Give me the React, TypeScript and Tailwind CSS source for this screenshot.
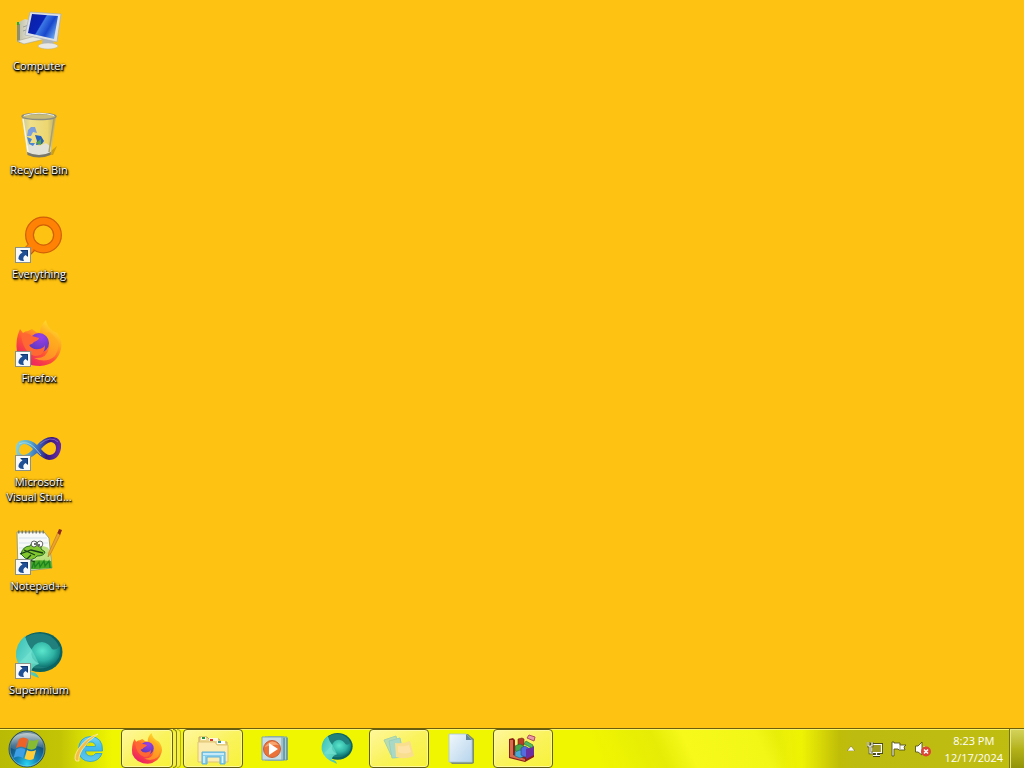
import type { ReactNode } from "react";

type IconProps = { className?: string };

function ComputerIcon({ className }: IconProps) {
  return (
    <svg viewBox="0 0 48 48" className={className} aria-hidden="true">
      <defs>
        <linearGradient id="pc-screen" x1="0" y1="0.2" x2="1" y2="0.7">
          <stop offset="0" stopColor="#0a1fa4" />
          <stop offset="0.42" stopColor="#0a24b8" />
          <stop offset="0.46" stopColor="#3c78e4" />
          <stop offset="0.7" stopColor="#1746cc" />
          <stop offset="1" stopColor="#6da8ee" />
        </linearGradient>
        <linearGradient id="pc-case" x1="0" y1="0" x2="1" y2="0">
          <stop offset="0" stopColor="#b9b9a0" />
          <stop offset="1" stopColor="#eceadc" />
        </linearGradient>
      </defs>
      <path d="M2 15 L10 11 L17 13 V33 L8 36 L2 33 Z" fill="url(#pc-case)" />
      <path d="M2 15 L5 16 V35 L2 33 Z" fill="#8d8f70" />
      <rect x="2" y="14" width="2" height="3" fill="#23b029" />
      <path d="M8 19 L14 17 M8 23 L14 21" stroke="#9aa09a" />
      <path d="M2 33 L20 28 L30 31 L9 36 Z" fill="#e9e8df" stroke="#a7a28c" strokeWidth="0.6" />
      <path d="M28 30 L38 32 L39 37 L27 36 Z" fill="#aeb6be" />
      <ellipse cx="33" cy="38" rx="10" ry="3" fill="#e8e9e6" stroke="#b4b09c" strokeWidth="0.5" />
      <path d="M15 4 L46 6 L42 34 L10 27 Z" fill="#dde1e6" stroke="#a7adb5" strokeWidth="0.7" />
      <path d="M17 6 L43 8 L39 31 L13 25 Z" fill="url(#pc-screen)" />
    </svg>
  );
}

function RecycleIcon({ className }: IconProps) {
  return (
    <svg viewBox="0 0 48 48" className={className} aria-hidden="true">
      <defs>
        <linearGradient id="bin-glass" x1="0" y1="0" x2="1" y2="0">
          <stop offset="0" stopColor="#c9c99c" />
          <stop offset="0.25" stopColor="#f0e08a" />
          <stop offset="0.75" stopColor="#ecd670" />
          <stop offset="1" stopColor="#b9ac68" />
        </linearGradient>
      </defs>
      <path d="M31 43 L42 34 L38 43 Z" fill="#a07b12" opacity="0.5" />
      <path d="M7 4 H41 L36 42 Q24 48 12 42 Z" fill="url(#bin-glass)" />
      <path d="M12 34 L19 31 L24 34 L31 31 L36 35 L35 42 Q24 47 13 42 Z" fill="#e2e2d9" />
      <path d="M12 40 Q24 46 36 40 L35.500 43 Q24 48 12.500 43 Z" fill="#77776c" />
      <path d="M8 7 L13 40" stroke="#fff" strokeWidth="1.500" opacity="0.8" />
      <path d="M39 7 L34 40" stroke="#a99f70" strokeWidth="1.500" />
      <ellipse cx="24" cy="4.500" rx="17" ry="3" fill="#c8bc78" stroke="#8b8c80" strokeWidth="1.400" />
      <path d="M9 3.500 Q24 -1 39 3.500" fill="none" stroke="#f0f0e4" strokeWidth="1" />
      <path d="M13 18 L16 15 H20 L22 21 L18 20 L16 24 H12 Z" fill="#7d9fdc" />
      <path d="M12 25 L17 27 L15 31 L20 31 L18 34 L14 32 Z" fill="#4a86d4" />
      <path d="M20 23 L26 24 L29 29 L27 32 L21 33 L22 29 Z" fill="#2862ba" />
      <path d="M21 31 L26 27 L26 33 Z" fill="#50a44b" />
    </svg>
  );
}

function EverythingIcon({ className }: IconProps) {
  return (
    <svg viewBox="0 0 48 48" className={className} aria-hidden="true">
      <path d="M16 26 L3 39 L10 44 L22 32 Z" fill="#ff8000" stroke="#c85a08" strokeWidth="1.200" />
      <circle cx="28.500" cy="19" r="14" fill="none" stroke="#d06008" strokeWidth="9" />
      <circle cx="28.500" cy="19" r="14" fill="none" stroke="#ff8205" strokeWidth="6.500" />
      <path d="M17 25 L11 31 L16 36 L22 30 Z" fill="#ff8205" />
    </svg>
  );
}

function FirefoxIcon({ className }: IconProps) {
  return (
    <svg viewBox="0 0 48 48" className={className} aria-hidden="true">
      <defs>
        <linearGradient id="fox-body" x1="0.85" y1="0.05" x2="0.25" y2="0.95">
          <stop offset="0" stopColor="#ffe52e" />
          <stop offset="0.35" stopColor="#ffa320" />
          <stop offset="0.65" stopColor="#ff5434" />
          <stop offset="1" stopColor="#ec1f65" />
        </linearGradient>
        <radialGradient id="fox-globe" cx="0.6" cy="0.2" r="0.9">
          <stop offset="0" stopColor="#9a3fe8" />
          <stop offset="1" stopColor="#5037b4" />
        </radialGradient>
      </defs>
      <path d="M5 9 L8 13 Q10 11 13 11 L17 9 L21 12 L25 13 Q25 5 31 0 Q32 7 38 11 L42 13 Q48 21 46 29 Q42 45 25 46 Q8 46 2 32 Q0 20 5 9 Z" fill="url(#fox-body)" />
      <path d="M34 12 Q49 22 40 36 Q31 44 19 38 Q32 39 34 28 Q36 20 28 15 Z" fill="#ffad20" opacity="0.7" />
      <circle cx="24" cy="23" r="10" fill="url(#fox-globe)" />
      <path d="M6 14 Q13 12 17 16 L24 18 Q24 20 19 22 Q18 24 14 25 Q17 30 24 29 Q29 28 30 25 Q30 36 20 36 Q8 33 6 14 Z" fill="#ff6733" />
    </svg>
  );
}

function VisualStudioIcon({ className }: IconProps) {
  return (
    <svg viewBox="0 0 48 48" className={className} aria-hidden="true">
      <defs>
        <linearGradient id="vs-loop" gradientUnits="userSpaceOnUse" x1="2" y1="20" x2="46" y2="28">
          <stop offset="0" stopColor="#88d0d8" />
          <stop offset="0.3" stopColor="#55a8cc" />
          <stop offset="0.5" stopColor="#3a62b4" />
          <stop offset="0.7" stopColor="#35187c" />
          <stop offset="1" stopColor="#6c2ca8" />
        </linearGradient>
      </defs>
      <path
        fillRule="evenodd"
        d="M1 27 Q0 16 10 16 Q17 16 22 21 Q30 12 38 13 Q47 14 46 24 Q44 36 34 36 Q28 35 22 29 Q15 35 9 36 Q2 35 1 27 Z M4 27 Q5 31 9 31 Q14 30 18 25 Q13 20 9 20 Q4 21 4 27 Z M26 25 Q31 31 35 31 Q41 30 41 24 Q41 19 36 18 Q31 19 26 25 Z"
        fill="url(#vs-loop)"
      />
      <path d="M25 20 Q36 11 43 18" fill="none" stroke="#9a78cc" strokeWidth="1" opacity="0.7" />
      <path d="M4 20 Q12 16 20 24 L26 31" fill="none" stroke="#b4e3e4" strokeWidth="1" opacity="0.7" />
    </svg>
  );
}

function NotepadIcon({ className }: IconProps) {
  return (
    <svg viewBox="0 0 48 48" className={className} aria-hidden="true">
      <path d="M2 4 H29 L34 10 L37 40 L3 44 Z" fill="#f8faf7" stroke="#8a916d" strokeWidth="0.8" />
      <path d="M4 10 H32 M4 15 H33 M4 20 H33 M5 25 H34 M5 31 H35" stroke="#ccd8e1" strokeWidth="0.7" />
      <path d="M3 4 H30" stroke="#777c70" strokeWidth="3" strokeDasharray="1.5 2" />
      <path d="M20 18 Q30 17 34 21 L37 40 L20 41 Z" fill="#a7d84c" opacity="0.7" />
      <path d="M7 34 Q20 31 36 33 L37 40 L7 42 Z" fill="#48a824" />
      <path d="M17 40 L19 34 L20 39 L24 34 L25 39 L29 33 L30 38 L34 33 L35 40" fill="none" stroke="#1d8422" strokeWidth="1.300" />
      <path d="M6 26 Q8 18 15 18 Q16 14 21 14 Q27 15 26 21 L30 24 Q29 28 22 28 Q17 34 10 30 Z" fill="#82c72d" stroke="#286c1d" strokeWidth="1" />
      <path d="M5 26 L16 22 L28 25 M9 22 L20 27 M16 27 L12 31 L20 34" fill="none" stroke="#183f19" strokeWidth="1.300" />
      <ellipse cx="19" cy="16" rx="2.800" ry="3" fill="#fff" stroke="#404040" strokeWidth="0.8" />
      <ellipse cx="25" cy="16" rx="2.800" ry="3" fill="#fff" stroke="#404040" strokeWidth="0.8" />
      <path d="M20 15 V17 M24 16 V18" stroke="#111" strokeWidth="1.200" />
      <path d="M33 29 L34 24 L43 4 L46 2 L45 7 L36 25 Z" fill="#eca32e" stroke="#b87222" strokeWidth="0.6" />
      <path d="M42.500 5 L44 1 L47 2 L45 7 Z" fill="#8c2920" />
    </svg>
  );
}

function SupermiumIcon({ className }: IconProps) {
  return (
    <svg viewBox="0 0 48 48" className={className} aria-hidden="true">
      <defs>
        <radialGradient id="sm-ball" cx="0.4" cy="0.35" r="0.65">
          <stop offset="0" stopColor="#5ce6cd" />
          <stop offset="0.6" stopColor="#2fb3a4" />
          <stop offset="1" stopColor="#0d7370" />
        </radialGradient>
        <linearGradient id="sm-tail" x1="0" y1="0" x2="1" y2="1">
          <stop offset="0" stopColor="#35bdb4" />
          <stop offset="0.5" stopColor="#65d9ca" />
          <stop offset="1" stopColor="#48c3aa" />
        </linearGradient>
      </defs>
      <ellipse cx="25" cy="20" rx="22.500" ry="20" fill="#0b6462" />
      <ellipse cx="24" cy="19" rx="20.500" ry="17.500" fill="#217f7c" />
      <path d="M15 22 Q18 10 27 10 Q34 11 37 17 Q41 19 45 14 Q47 27 37 33 Q27 38 20 32 Z" fill="url(#sm-ball)" />
      <path d="M10 4 Q12 12 17 18 Q14 26 24 32 Q17 34 16 40 Q22 40 24 46 Q4 40 1 25 Q0 12 10 4 Z" fill="url(#sm-tail)" />
      <path d="M17 18 L24 32 L4 31 Q10 25 17 18 Z" fill="#7be8d6" opacity="0.5" />
    </svg>
  );
}

function ShortcutArrow() {
  return (
    <svg viewBox="0 0 16 16" className="absolute bottom-px left-0 size-4" aria-hidden="true">
      <rect x="0.500" y="0.500" width="15" height="15" fill="#f7f9fb" stroke="#8c9187" />
      <path d="M5 3 H13 V10 L10.500 8 Q7 10 9 14 Q5 14.500 3.500 12 Q3 8 7.500 5.500 Z" fill="#1f4f94" />
      <path d="M6 3.500 H12.500 V9" fill="none" stroke="#12386f" />
    </svg>
  );
}

function StartOrb({ className }: IconProps) {
  return (
    <svg viewBox="0 0 38 38" className={className} aria-hidden="true">
      <defs>
        <radialGradient id="orb-blue" cx="0.5" cy="0.92" r="0.85">
          <stop offset="0" stopColor="#29d5f2" />
          <stop offset="0.35" stopColor="#1482b5" />
          <stop offset="0.75" stopColor="#164f77" />
          <stop offset="1" stopColor="#536e78" />
        </radialGradient>
        <linearGradient id="orb-shine" x1="0" y1="0" x2="0" y2="1">
          <stop offset="0" stopColor="#e5edef" stopOpacity="0.75" />
          <stop offset="1" stopColor="#b4c7d0" stopOpacity="0.15" />
        </linearGradient>
      </defs>
      <circle cx="19" cy="19" r="18" fill="url(#orb-blue)" stroke="#344e55" />
      <path d="M3 18 Q3 3 19 3 Q35 3 35 18 Q27 14 19 18 Q10 22 3 18 Z" fill="url(#orb-shine)" />
      <path d="M11 9 Q15 6 20 9 L18 18 Q13 15 8 18 Z" fill="#ed6226" />
      <path d="M21 10 Q26 12 31 9 L28 18 Q24 21 19 18.500 Z" fill="#87bb32" />
      <path d="M8 19.500 Q13 16.500 17.500 19.500 L15 28 Q10 25 5.500 28 Z" fill="#3d9fe5" />
      <path d="M19 20 Q23 22.500 28 20 L25.500 29 Q21 31 16.500 28.500 Z" fill="#ffcd37" />
      <circle cx="19" cy="19" r="17" fill="none" stroke="#a9dce5" opacity="0.45" />
    </svg>
  );
}

function ExplorerEIcon({ className }: IconProps) {
  return (
    <svg viewBox="0 0 32 32" className={className} aria-hidden="true">
      <defs>
        <linearGradient id="ie-e" x1="0" y1="0" x2="0" y2="1">
          <stop offset="0" stopColor="#70d3f3" />
          <stop offset="0.5" stopColor="#42baea" />
          <stop offset="1" stopColor="#62c9ed" />
        </linearGradient>
      </defs>
      <path fillRule="evenodd" d="M29.500 18 H12.500 Q13 23 18 23 Q21 23 22.500 20.500 H29 Q26 28.500 17 28.500 Q6 28 5.500 16.500 Q6 4 17.500 3.500 Q30 4 29.500 18 Z M12.700 13.500 H22.500 Q22 9 17.500 9 Q13.500 9 12.700 13.500 Z" fill="url(#ie-e)" stroke="#2ba0d0" strokeWidth="0.800" />
      <path d="M3 28 Q0 24 6 15 Q14 4 25 1 Q14 8 9 17 Q5 24 6 28 Z" fill="#f5bd48" stroke="#fff0a0" strokeWidth="0.800" />
    </svg>
  );
}

function FolderIcon({ className }: IconProps) {
  return (
    <svg viewBox="0 0 36 32" className={className} aria-hidden="true">
      <path d="M4 4 H12 L14 6 H24 L26 9 H32 V28 H4 Z" fill="#eed78c" stroke="#c5a85c" />
      <path d="M6 4 H11 V7 H6 Z" fill="#fffce6" />
      <rect x="7" y="4" width="3" height="2" fill="#25933e" />
      <rect x="14" y="5" width="9" height="3" fill="#fff9dd" />
      <rect x="15" y="6" width="3" height="2" fill="#dd342a" />
      <path d="M3 9 H20 L22 12 H33 V29 H3 Z" fill="#fcecb0" stroke="#dfc476" />
      <rect x="22" y="8" width="8" height="3" fill="#fff" />
      <rect x="23" y="8" width="3" height="2" fill="#3b9482" />
      <path d="M7 19 H30 V31 H25 V24 H12 V31 H7 Z" fill="#85cdeb" stroke="#62b2d8" />
      <path d="M8 20 H29 V22 H8 Z" fill="#c6eaf8" />
      <path d="M9 23 V30 M27.500 23 V30" stroke="#ddf7ff" strokeWidth="1.500" />
    </svg>
  );
}

function MediaIcon({ className }: IconProps) {
  return (
    <svg viewBox="0 0 32 32" className={className} aria-hidden="true">
      <path d="M9 4 H28 V27 H9 Z" fill="#a5cfcf" stroke="#7ba5a4" />
      <path d="M6 4 H25 V27 H6 Z" fill="#b5d9dc" stroke="#7ba5a9" />
      <path d="M3 4 H23 V27 H3 Z" fill="#c8dde1" stroke="#83a7b4" />
      <path d="M25 5 V27 M28 5 V27" stroke="#4d7c98" />
      <circle cx="13" cy="16" r="8.500" fill="#ec7338" stroke="#c46137" />
      <path d="M5.500 14 Q13 4 20 12 Q15 11 5.500 14 Z" fill="#ffc18d" opacity="0.65" />
      <path d="M10 10 L19 16 L10 22 Z" fill="#fff" />
    </svg>
  );
}

function NotesIcon({ className }: IconProps) {
  return (
    <svg viewBox="0 0 32 32" className={className} aria-hidden="true">
      <path d="M1 7 L13 3 L18 22 L8 22 Z" fill="#b9dcae" stroke="#a2d2ae" />
      <path d="M6 8 L17 5 L21 24 L9 25 Z" fill="#a8d9c6" stroke="#98cfbe" />
      <path d="M12 10 Q20 11 27 8 L31 23 Q22 27 13 24 Z" fill="#f8de8e" />
      <path d="M15 13 Q22 14 26 12 L28 19 Q21 22 15 19 Z" fill="#ffe6ae" opacity="0.75" />
    </svg>
  );
}

function DocumentIcon({ className }: IconProps) {
  return (
    <svg viewBox="0 0 28 32" className={className} aria-hidden="true">
      <defs>
        <linearGradient id="doc-page" x1="0" y1="0" x2="1" y2="1">
          <stop offset="0" stopColor="#f0f7fc" />
          <stop offset="1" stopColor="#b6d4ec" />
        </linearGradient>
      </defs>
      <path d="M4 1 H21 L27 6 V30 L25 31 H5 L3 29 V3 Z" fill="#7f8f71" />
      <path d="M2 1 H19 L25 7 V29 H2 Z" fill="url(#doc-page)" stroke="#a8c5d5" strokeWidth="0.800" />
      <path d="M19 1 L25 7 H19 Z" fill="#638599" />
    </svg>
  );
}

function BlocksIcon({ className }: IconProps) {
  return (
    <svg viewBox="0 0 32 32" className={className} aria-hidden="true">
      <path d="M2 6 L6 5 L8 7 V20 L20 24 L27 19 V24 L18 29 L2 25 Z" fill="#8c2018" />
      <path d="M3 7 L6 7 V22 L18 26 V28 L3 24 Z" fill="#d66b50" />
      <path d="M11 6 L15 5 L17 6 V12 L13 13 L11 12 Z" fill="#b63e25" stroke="#762116" strokeWidth="0.600" />
      <path d="M8 13 L13 11 L17 13 V18 L12 19 L8 18 Z" fill="#48a747" stroke="#235b2a" strokeWidth="0.600" />
      <path d="M8 19 L13 17 L18 19 V23 L13 25 L8 23 Z" fill="#49abd1" stroke="#18647c" strokeWidth="0.600" />
      <path d="M14 15 L18 13 L23 16 V22 L18 24 L14 22 Z" fill="#536cdf" stroke="#304187" strokeWidth="0.600" />
      <path d="M19 16 L27 13 V22 L19 26 Z" fill="#6a2fa0" />
      <path d="M19 8 L26 12 L25 15 L17 11 Z" fill="#51b866" stroke="#25731e" strokeWidth="0.600" />
      <path d="M22 2 L28 4 L27 8 L20 5 Z" fill="#e99ba8" stroke="#b14d5c" />
    </svg>
  );
}

type DesktopItem = {
  label: string;
  icon: ReactNode;
  shortcut?: boolean;
};

const desktopItems: DesktopItem[] = [
  { label: "Computer", icon: <ComputerIcon className="size-12" /> },
  { label: "Recycle Bin", icon: <RecycleIcon className="size-12" /> },
  { label: "Everything", icon: <EverythingIcon className="size-12" />, shortcut: true },
  { label: "Firefox", icon: <FirefoxIcon className="size-12" />, shortcut: true },
  { label: "Microsoft Visual Stud...", icon: <VisualStudioIcon className="size-12" />, shortcut: true },
  { label: "Notepad++", icon: <NotepadIcon className="size-12" />, shortcut: true },
  { label: "Supermium", icon: <SupermiumIcon className="size-12" />, shortcut: true },
];

type TaskItem = {
  label: string;
  icon: ReactNode;
  state: "pinned" | "open" | "stacked";
};

const taskItems: TaskItem[] = [
  { label: "Internet Explorer", icon: <ExplorerEIcon className="size-8" />, state: "pinned" },
  { label: "Firefox", icon: <FirefoxIcon className="size-8" />, state: "stacked" },
  { label: "Windows Explorer", icon: <FolderIcon className="h-8 w-9" />, state: "open" },
  { label: "Windows Media Player", icon: <MediaIcon className="size-8" />, state: "pinned" },
  { label: "Supermium", icon: <SupermiumIcon className="size-8" />, state: "pinned" },
  { label: "Sticky Notes", icon: <NotesIcon className="size-8" />, state: "open" },
  { label: "Document", icon: <DocumentIcon className="h-8 w-7" />, state: "pinned" },
  { label: "Blocks", icon: <BlocksIcon className="size-8" />, state: "open" },
];

const openStyle =
  "rounded-sm border border-[#655d12] bg-linear-to-br from-[#fff79a] via-[#faf35c] to-[#f8f236] shadow-[inset_0_0_0_1px_#fffb9d]";

function TaskButton({ item }: { item: TaskItem }) {
  if (item.state === "stacked") {
    return (
      <button type="button" aria-label={item.label} className="flex h-full w-15 items-stretch">
        <span className={`flex w-13 items-center justify-center ${openStyle}`}>{item.icon}</span>
        <span className="w-1 rounded-r-sm border-y border-r border-[#817b17] bg-[#f5ef45]" />
        <span className="w-1 rounded-r-sm border-y border-r border-[#b9b41e] bg-[#f5ef45]" />
      </button>
    );
  }
  return (
    <button
      type="button"
      aria-label={item.label}
      className={`flex h-full w-15 items-center justify-center ${item.state === "open" ? openStyle : ""}`}
    >
      {item.icon}
    </button>
  );
}

function NetworkIcon() {
  return (
    <svg viewBox="0 0 16 16" className="size-4" aria-hidden="true">
      <path d="M4.500 3.500 H14.500 V11.500 H4.500 Z M9.500 11.500 V14 M6 14.500 H13" fill="#8e8a22" stroke="#47471a" strokeWidth="3" />
      <path d="M4.500 3.500 H14.500 V11.500 H4.500 Z M9.500 11.500 V14 M6 14.500 H13" fill="#a09c22" stroke="#fff" strokeWidth="1.200" />
      <path d="M1 1 V5 H5 V1 M3 5 V12 H6" fill="none" stroke="#47471a" strokeWidth="2.600" />
      <path d="M1 1 V5 H5 V1 M3 5 V12 H6" fill="none" stroke="#fff" strokeWidth="1.200" />
    </svg>
  );
}

function FlagIcon() {
  return (
    <svg viewBox="0 0 16 16" className="size-4" aria-hidden="true">
      <path d="M1 1 H3 V2 H9 V4 H15 L13 6 L14 9 H8 L7 8 H3 V15 H1 Z" fill="#fff" stroke="#53521b" strokeWidth="0.900" />
      <path d="M9 3 V8" stroke="#8b8536" strokeWidth="0.800" />
    </svg>
  );
}

function MutedIcon() {
  return (
    <svg viewBox="0 0 16 16" className="size-4" aria-hidden="true">
      <path d="M0.500 5 H3 L7 1 V14 L3 11 H0.500 Z" fill="#fff" stroke="#55541d" strokeWidth="0.900" />
      <path d="M9 5 Q11 8 9 11" fill="none" stroke="#fff" />
      <circle cx="11" cy="10.500" r="5" fill="#dc4534" />
      <path d="M9 8.500 L13 12.500 M13 8.500 L9 12.500" stroke="#fff" strokeWidth="1.500" />
    </svg>
  );
}

export default function App() {
  return (
    <div className="flex min-h-screen flex-col bg-[#fec212] font-['Open_Sans','Noto_Sans',sans-serif] text-[11px] leading-[15px]">
      <main className="flex-1 pt-2">
        <ul className="flex w-20 flex-col">
          {desktopItems.map((item) => (
            <li key={item.label} className="h-26 last:h-auto">
              <button type="button" className="flex w-full flex-col items-center gap-0.5 pr-0.5 text-white">
                <span className="relative">
                  {item.icon}
                  {item.shortcut && <ShortcutArrow />}
                </span>
                <span className="w-full text-center font-medium text-shadow-[0_1px_1px_#000,1px_1px_1px_#000,1px_2px_2px_#000,0_0_2px_#000]">
                  {item.label}
                </span>
              </button>
            </li>
          ))}
        </ul>
      </main>
      <footer className="flex h-10 items-stretch justify-between border-t border-[#6b5d0a] bg-[#f0f600] bg-[linear-gradient(90deg,#b9ba04_0,#c2c404_60px,#d4d804_78px,#f0f600_112px,transparent_180px),linear-gradient(270deg,#c0bd11_0,#bdbb10_170px,#c0bd08_185px,#eef303_222px,transparent_250px),linear-gradient(65deg,transparent_58%,#e6ec05_64%,#f6f91a_67%,#f3f716_74%,#e8ed09_76%,transparent_83%)] shadow-[inset_0_1px_0_#fff660]">
        <nav aria-label="Taskbar" className="flex gap-0.5">
          <button type="button" aria-label="Start" className="mr-0.5 flex w-[55px] items-center justify-center pr-0.5">
            <StartOrb className="size-[38px]" />
          </button>
          {taskItems.map((item) => (
            <TaskButton key={item.label} item={item} />
          ))}
        </nav>
        <div className="flex items-stretch text-white">
          <div className="flex items-center gap-2 pr-3.5">
            <button type="button" aria-label="Show hidden icons" className="flex size-4 items-center justify-center">
              <svg viewBox="0 0 8 5" className="h-[5px] w-2" aria-hidden="true">
                <path d="M4 0 L8 5 H0 Z" fill="#fff" stroke="#77731b" strokeWidth="0.600" />
              </svg>
            </button>
            <button type="button" aria-label="Network"><NetworkIcon /></button>
            <button type="button" aria-label="Action Center"><FlagIcon /></button>
            <button type="button" aria-label="Volume muted"><MutedIcon /></button>
          </div>
          <button type="button" className="flex flex-col items-center justify-center gap-0.5 pr-1.5">
            <span>8:23 PM</span>
            <span>12/17/2024</span>
          </button>
          <button
            type="button"
            aria-label="Show desktop"
            className="w-[15px] border-l border-[#77760c] bg-linear-to-b from-[#d5d45b] via-[#b5b31b] to-[#929307] shadow-[inset_1px_1px_0_#e9e887]"
          />
        </div>
      </footer>
    </div>
  );
}
